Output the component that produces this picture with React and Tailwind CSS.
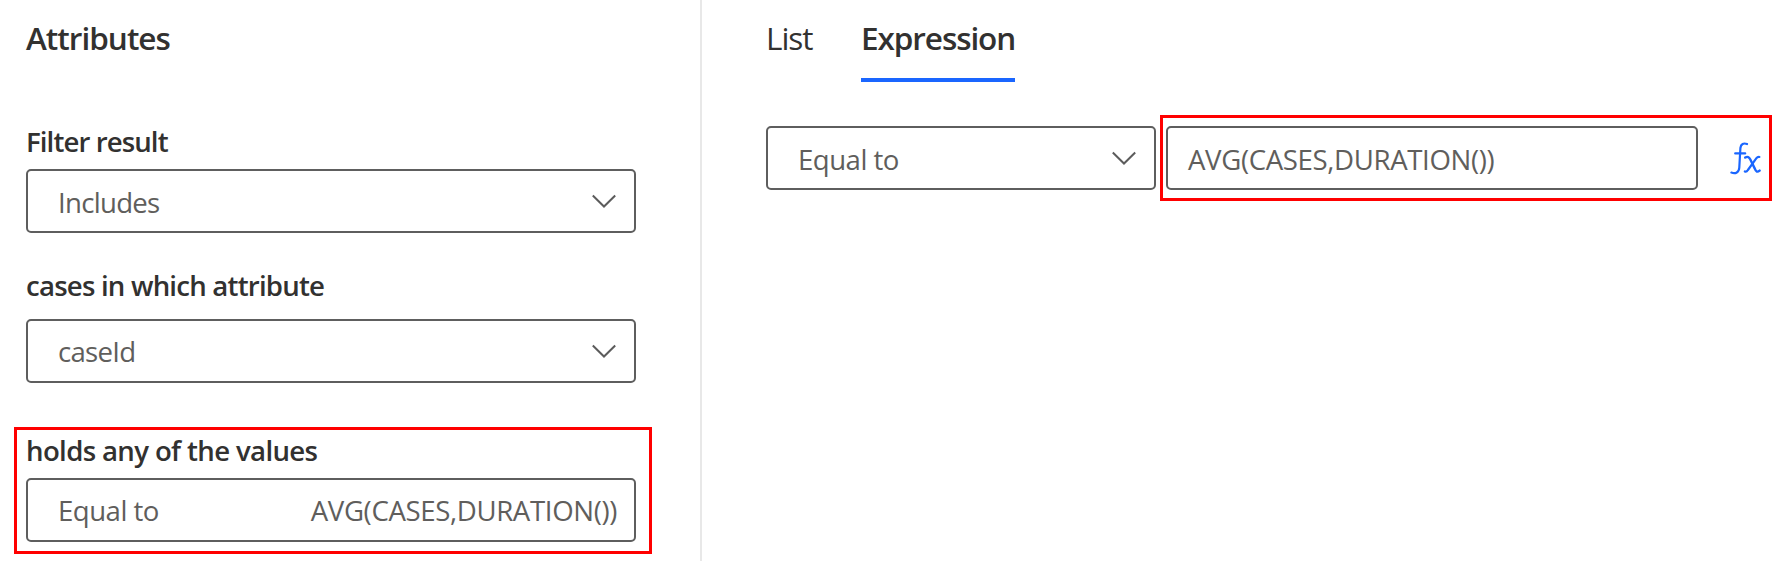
function Chevron() {
  return (
    <svg width="24" height="14" viewBox="0 0 24 14" fill="none" stroke="#5c5c5c" strokeWidth="2">
      <path d="M0.8 1.5 12 12.5 23.2 1.5" />
    </svg>
  );
}

function FxIcon() {
  return (
    <svg width="31" height="33" viewBox="0 0 31 33" fill="none" stroke="#1a66ff" strokeWidth="2.2" strokeLinecap="round" strokeLinejoin="round">
      <path d="M17 2C13.6 0.7 10.9 2 10.4 6L9.3 25.5C9 30.5 5.5 32.2 1.4 30.6" />
      <path d="M5.2 11.4H15.2" />
      <path d="M15.2 15.6C17.6 14.1 19 15 20.2 17.2L24.8 26.6C26 29.9 27.4 30.4 29.6 28.6" strokeWidth="2.4" />
      <path d="M29.4 15C28 14.6 27 15.5 25.9 16.8L17.9 28C16.9 29.6 16 30 14.8 29.4" />
    </svg>
  );
}

function Field({ className, children }) {
  return (
    <div className={`flex h-16 items-center justify-between rounded-[5px] border-2 border-[#5e5e5e] text-[27.6px] leading-9 text-[#605e5c] ${className}`}>
      {children}
    </div>
  );
}

function Label({ className, children }) {
  return <div className={`whitespace-nowrap text-[27.6px] font-semibold leading-9 ${className}`}>{children}</div>;
}

export default function App() {
  return (
    <div className="flex h-[561px] w-[1779px] overflow-hidden bg-white font-['Open_Sans',sans-serif] text-[#323130]">
      <section className="w-[702px] shrink-0 border-r-2 border-[#e8e8e8] pt-[18px]">
        <h2 className="ml-[26px] text-[31.5px] font-semibold leading-10 tracking-[-0.98px]">Attributes</h2>
        <div className="ml-[26px] mt-[65px] w-[610px]">
          <Label className="tracking-[-0.9px]">Filter result</Label>
          <Field className="mt-[10px] pl-[30px] pr-[18px]">
            <span className="mt-[2px] tracking-[-0.72px]">Includes</span>
            <Chevron />
          </Field>
          <Label className="mt-[34px] tracking-[-0.79px]">cases in which attribute</Label>
          <Field className="mt-4 pl-[30px] pr-[18px]">
            <span className="tracking-[-0.72px]">caseId</span>
            <Chevron />
          </Field>
        </div>
        <div className="ml-[14px] mt-11 h-[127px] w-[638px] border-[3px] border-[#ff0000] pl-[9px] pr-[13px] pt-[2px]">
          <Label className="tracking-[-0.64px]">holds any of the values</Label>
          <Field className="mt-[10px] pl-[30px] pr-[17px]">
            <span className="tracking-[-0.52px]">Equal to</span>
            <span className="tracking-[-0.36px]">AVG(CASES,DURATION())</span>
          </Field>
        </div>
      </section>
      <section className="pl-16 pt-[18px]">
        <nav className="flex text-[31.5px] leading-10">
          <div className="w-[95px] tracking-[-1.05px]">List</div>
          <div className="h-16 w-[154px] whitespace-nowrap border-b-4 border-[#1a66ff] font-semibold tracking-[-1.08px]">Expression</div>
        </nav>
        <div className="mt-[33px] flex items-center">
          <Field className="w-[390px] pl-[30px] pr-[18px]">
            <span className="mt-[2px] tracking-[-0.52px]">Equal to</span>
            <Chevron />
          </Field>
          <div className="ml-1 flex h-[86px] w-[612px] items-center border-[3px] border-[#ff0000] pl-[3px]">
            <Field className="w-[532px] pl-5">
              <span className="mt-[2px] tracking-[-0.36px]">AVG(CASES,DURATION())</span>
            </Field>
            <div className="ml-8">
              <FxIcon />
            </div>
          </div>
        </div>
      </section>
    </div>
  );
}
